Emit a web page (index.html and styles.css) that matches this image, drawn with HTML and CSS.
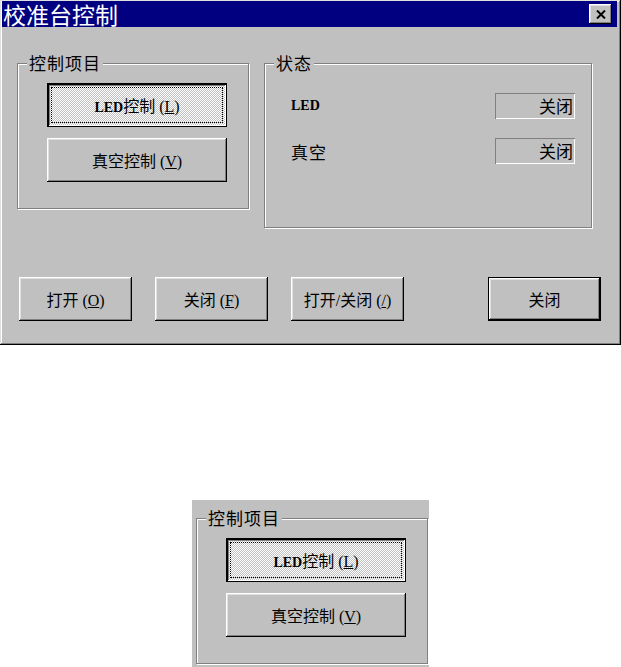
FILE: index.html
```html
<!DOCTYPE html>
<html lang="zh-CN">
<head>
    <meta charset="UTF-8">
    <meta name="viewport" content="width=device-width, initial-scale=1.0">
    <title>校准台控制</title>
    <link rel="stylesheet" href="styles.css">
</head>
<body>
    <div class="dialog">
        <div class="titlebar">
            <span class="title">校准台控制</span>
            <button class="close-btn" aria-label="关闭">
                <svg width="10" height="9" viewBox="0 0 10 9">
                    <path d="M1 0.5L9 8.5M9 0.5L1 8.5" stroke="#000" stroke-width="2" fill="none"/>
                </svg>
            </button>
        </div>
        <div class="dialog-body">
            <div class="groups">
                <fieldset class="group group-items">
                    <legend>控制项目</legend>
                    <div class="group-content">
                        <button class="btn btn-wide btn-checked"><span class="latin">LED</span>控制 (<u>L</u>)</button>
                        <button class="btn btn-wide">真空控制 (<u>V</u>)</button>
                    </div>
                </fieldset>
                <fieldset class="group group-status">
                    <legend>状态</legend>
                    <div class="group-content">
                        <div class="status-row">
                            <span class="status-label latin">LED</span>
                            <span class="status-value">关闭</span>
                        </div>
                        <div class="status-row">
                            <span class="status-label">真空</span>
                            <span class="status-value">关闭</span>
                        </div>
                    </div>
                </fieldset>
            </div>
            <div class="actions">
                <button class="btn">打开 (<u>O</u>)</button>
                <button class="btn">关闭 (<u>F</u>)</button>
                <button class="btn">打开/关闭 (<u>/</u>)</button>
                <button class="btn btn-default">关闭</button>
            </div>
        </div>
    </div>

    <div class="detail">
        <fieldset class="group group-items">
            <legend>控制项目</legend>
            <div class="group-content">
                <button class="btn btn-wide btn-checked"><span class="latin">LED</span>控制 (<u>L</u>)</button>
                <button class="btn btn-wide">真空控制 (<u>V</u>)</button>
            </div>
        </fieldset>
    </div>
</body>
</html>
```

FILE: styles.css
```css
* {
    box-sizing: border-box;
}
html, body {
    overflow: hidden;
}
body {
    margin: 0;
    background: #fff;
    color: #000;
    font-family: "Liberation Serif", "Noto Sans CJK SC", serif;
    font-size: 16px;
}
.dialog {
    width: 621px;
    height: 345px;
    padding: 1px 4px 3px 2px;
    background: #c0c0c0;
    box-shadow: inset -1px -1px #000, inset 1px 1px #dfdfdf, inset -2px -2px #808080, inset 2px 2px #fff;
    display: flex;
    flex-direction: column;
}
.titlebar {
    height: 26px;
    padding: 0 5px 0 1px;
    background: #000080;
    color: #fff;
    display: flex;
    align-items: center;
    justify-content: space-between;
}
.title {
    font-family: "Noto Sans CJK SC", sans-serif;
    font-size: 23px;
    line-height: 1;
}
.close-btn {
    width: 23px;
    height: 20px;
    padding: 0;
    border: none;
    background: #c0c0c0;
    box-shadow: inset -1px -1px #000, inset 1px 1px #fff, inset -2px -2px #808080, inset 2px 2px #dfdfdf;
    display: flex;
    align-items: center;
    justify-content: center;
}
.dialog-body {
    flex: 1;
    padding: 0 16px 0 15px;
}
.groups {
    margin-top: 27px;
    display: flex;
    align-items: flex-start;
}
.group {
    margin: 0;
    padding: 0;
    min-width: 0;
    border: 1px solid #808080;
    box-shadow: inset 1px 1px #fff, 1px 1px #fff;
}
.group legend {
    margin-left: 9px;
    padding: 0 2px;
    background: #c0c0c0;
    font-family: "Noto Sans CJK SC", sans-serif;
    font-size: 17px;
    line-height: 18px;
    letter-spacing: 1px;
}
.group-content {
    display: flex;
    flex-direction: column;
}
.group-items {
    width: 232px;
}
.group-items .group-content {
    padding: 11px 0 26px 29px;
    gap: 11px;
}
.group-status {
    width: 328px;
    margin-left: 15px;
}
.group-status .group-content {
    padding: 21px 16px 63px 26px;
    gap: 19px;
}
.status-row {
    height: 26px;
    display: flex;
    align-items: center;
    justify-content: space-between;
}
.status-label {
    font-family: "Noto Sans CJK SC", sans-serif;
    font-size: 17px;
    letter-spacing: 1px;
}
.latin {
    font-family: "Liberation Serif", serif;
    font-weight: bold;
    font-size: 14px;
    letter-spacing: 0;
}
.status-value {
    width: 80px;
    height: 26px;
    padding-right: 2px;
    box-shadow: inset 1px 1px #808080, inset -1px -1px #fff;
    font-family: "Noto Sans CJK SC", sans-serif;
    font-size: 17px;
    line-height: 26px;
    text-align: right;
}
.btn {
    flex-shrink: 0;
    width: 113px;
    height: 44px;
    padding: 0;
    border: none;
    background: #c0c0c0;
    box-shadow: inset -1px -1px #000, inset 1px 1px #fff, inset -2px -2px #808080, inset 2px 2px #dfdfdf;
    color: #000;
    font: inherit;
}
.btn-wide {
    width: 180px;
}
.btn-checked {
    background: repeating-conic-gradient(#c0c0c0 0 25%, #fff 0 50%) 0 0 / 2px 2px;
    box-shadow: inset 0 0 0 1px #000, inset 2px 2px #000, inset -2px -2px #fff, inset 3px 3px #808080;
    outline: 1px dotted #000;
    outline-offset: -5px;
}
.btn-default {
    margin-left: auto;
    box-shadow: inset 0 0 0 1px #000, inset -2px -2px #000, inset 2px 2px #fff, inset -3px -3px #808080, inset 3px 3px #dfdfdf;
}
.actions {
    margin-top: 49px;
    padding-left: 2px;
    display: flex;
    gap: 23px;
}
.detail {
    width: 237px;
    height: 167px;
    margin: 155px 0 0 192px;
    padding: 9px 0 0 4px;
    background: #c0c0c0;
}
```
